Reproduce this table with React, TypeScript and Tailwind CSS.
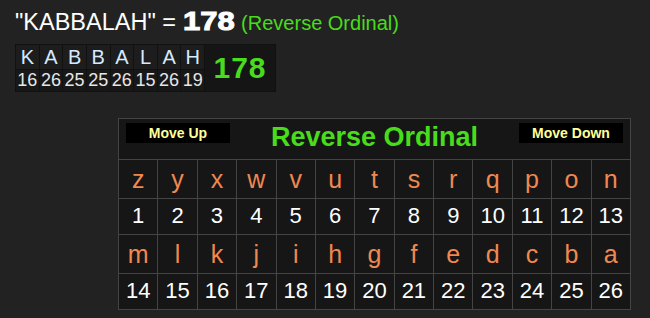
const row1 = "zyxwvutsrqpon".split("");
const row2 = "mlkjihgfedcba".split("");
const word = "KABBALAH".split("");
const vals = [16, 26, 25, 25, 26, 15, 26, 19];

export default function App() {
  return (
    <div className="min-h-screen w-full bg-[#222222] font-['Liberation_Sans',Arial,sans-serif]">
      <div className="h-[44px] pl-[15px] pt-[7.5px]">
        <div className="flex items-baseline leading-none whitespace-pre">
          <span className="text-[23.5px] text-white">"KABBALAH" = </span>
          <span className="inline-block w-[53px] origin-left scale-x-[1.19] text-[26px] font-bold text-white [-webkit-text-stroke:1px_white]">
            178
          </span>
          <span className="text-[20px] text-[#48dc1c]"> (Reverse Ordinal)</span>
        </div>
      </div>

      <div className="ml-[15px] inline-flex gap-px bg-[#111111] p-px">
        <div className="grid w-[188px] grid-cols-8 gap-px">
          {word.map((c, i) => (
            <div
              key={"l" + i}
              className="flex h-[24px] items-center justify-center bg-[#1d1d1d] text-[20px] leading-none text-[#d6eaff]"
            >
              {c}
            </div>
          ))}
          {vals.map((v, i) => (
            <div
              key={"v" + i}
              className="flex h-[21px] items-center justify-center bg-[#181818] pb-[1px] text-[18px] leading-none text-[#e6e6e6]"
            >
              {v}
            </div>
          ))}
        </div>
        <div className="flex w-[70px] items-center justify-center bg-[#151515] text-[30px] font-bold leading-none tracking-[1px] text-[#48dc1c]">
          178
        </div>
      </div>

      <div className="ml-[118px] mt-[26px] flex w-[513px] flex-col gap-px bg-[#444444] p-px">
        <div className="flex h-[40px] items-start justify-between bg-[#161616] px-[7px] pt-[4px]">
          <button className="flex h-[20px] w-[104px] items-center justify-center bg-black text-[14px] font-bold leading-none text-[#ffff99]">
            Move Up
          </button>
          <div className="mt-[1px] text-[27px] font-bold leading-none text-[#48dc1c]">Reverse Ordinal</div>
          <button className="flex h-[20px] w-[104px] items-center justify-center bg-black text-[14px] font-bold leading-none text-[#ffff99]">
            Move Down
          </button>
        </div>
        <div className="grid grid-cols-[repeat(13,minmax(0,1fr))] gap-px">
          {row1.map((c) => (
            <div
              key={c}
              className="flex h-[38px] items-center justify-center bg-[#161616] text-[25px] leading-none text-[#f08850]"
            >
              {c}
            </div>
          ))}
          {row1.map((_, i) => (
            <div
              key={"n1" + i}
              className="flex h-[35px] items-center justify-center bg-[#161616] pb-[2px] text-[22px] leading-none text-white"
            >
              {i + 1}
            </div>
          ))}
          {row2.map((c) => (
            <div
              key={c}
              className="flex h-[38px] items-center justify-center bg-[#161616] text-[25px] leading-none text-[#f08850]"
            >
              {c}
            </div>
          ))}
          {row2.map((_, i) => (
            <div
              key={"n2" + i}
              className="flex h-[35px] items-center justify-center bg-[#161616] pb-[2px] text-[22px] leading-none text-white"
            >
              {i + 14}
            </div>
          ))}
        </div>
      </div>
    </div>
  );
}
